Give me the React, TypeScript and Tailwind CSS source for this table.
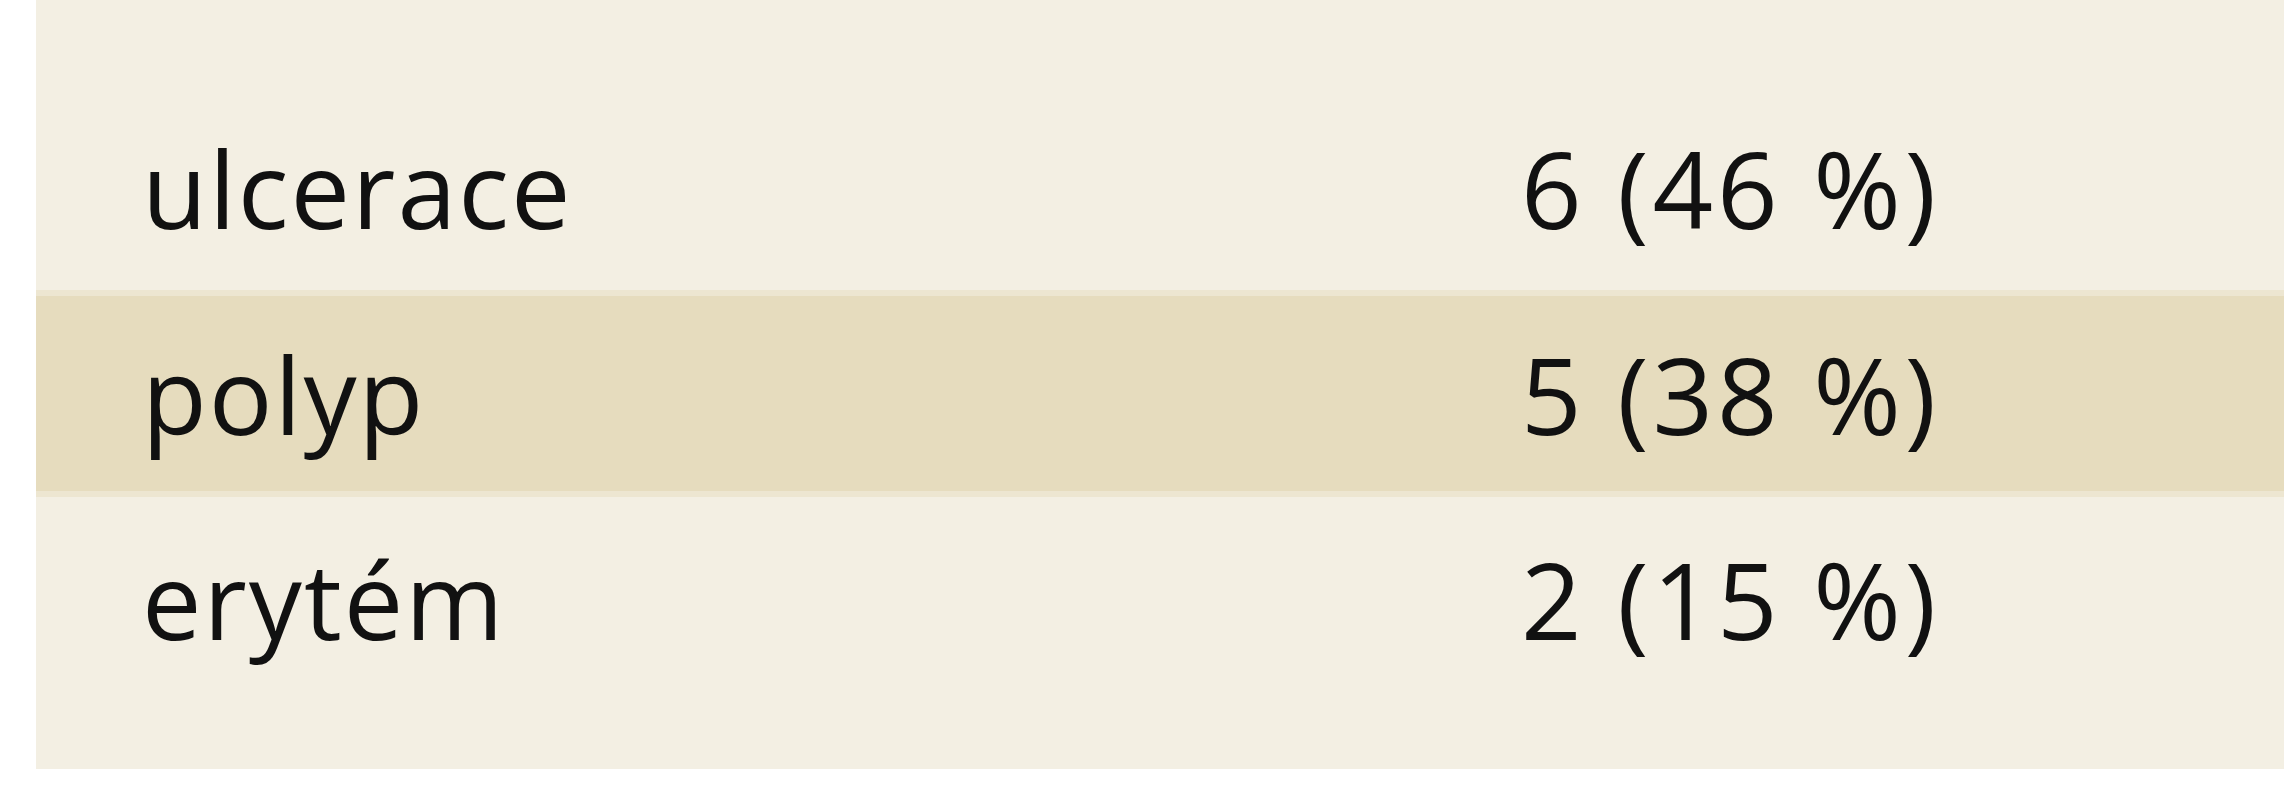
const rows = [
  { label: "ulcerace", value: "6 (46 %)", shaded: false },
  { label: "polyp", value: "5 (38 %)", shaded: true },
  { label: "erytém", value: "2 (15 %)", shaded: false },
];

export default function App() {
  return (
    <div className="h-[800px] w-[2296px] bg-white">
      <div
        className="ml-[36px] flex h-[769px] w-[2248px] flex-col bg-[#f3efe3] pt-[86px] text-[#111111]"
        style={{ fontFamily: '"Open Sans", "Noto Sans", sans-serif' }}
      >
        {rows.map((r) => (
          <div
            key={r.label}
            className={
              r.shaded
                ? "grid h-[207px] grid-cols-[1485px_1fr] items-center border-y-[6px] border-[#ede6d1] bg-[#e6dcbe] text-[106px] leading-none"
                : "grid h-[204px] grid-cols-[1485px_1fr] items-center text-[106px] leading-none"
            }
          >
            <span className="pl-[106px] tracking-[2px]">{r.label}</span>
            <span className="tracking-[4px]">{r.value}</span>
          </div>
        ))}
      </div>
    </div>
  );
}
